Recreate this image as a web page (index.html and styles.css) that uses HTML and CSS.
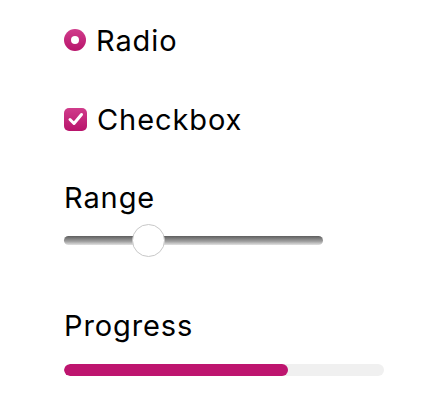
FILE: index.html
```html
<!DOCTYPE html>
<html>
<head>
<meta charset="utf-8">
<link rel="stylesheet" href="styles.css">
</head>
<body>
<div class="panel">
  <label class="row">
    <span class="radio"><span class="radio-dot"></span></span>
    <span class="text">Radio</span>
  </label>
  <label class="row">
    <span class="check">
      <svg width="22" height="22" viewBox="0 0 22 22"><path d="M5 11.5 L9 15.5 L16.5 6.5" fill="none" stroke="#fff" stroke-width="3" stroke-linecap="round" stroke-linejoin="round"/></svg>
    </span>
    <span class="text">Checkbox</span>
  </label>
  <div class="label range-label">Range</div>
  <div class="slider">
    <div class="track"></div>
    <div class="thumb"></div>
  </div>
  <div class="label progress-label">Progress</div>
  <div class="progress"><div class="fill" style="width:70%"></div></div>
</div>
</body>
</html>
```
FILE: styles.css
```css
html, body {
  margin: 0;
  background: #fff;
}
body {
  font-family: Inter, "Noto Sans", sans-serif;
  color: #000;
}
.panel {
  display: flex;
  flex-direction: column;
  padding: 20px 0 0 64px;
  width: 320px;
}
.row {
  display: flex;
  align-items: center;
  gap: 10px;
  height: 40px;
  font-size: 29px;
  letter-spacing: 0.9px;
}
.row + .row {
  margin-top: 39px;
}
.radio {
  width: 22px;
  height: 22px;
  border-radius: 50%;
  background: linear-gradient(#d03c8b, #b8146b);
  display: flex;
  align-items: center;
  justify-content: center;
  flex: none;
}
.radio-dot {
  width: 8px;
  height: 8px;
  border-radius: 50%;
  background: #fff;
}
.check {
  width: 23px;
  height: 23px;
  border-radius: 5px;
  background: linear-gradient(#d03c8b, #b8146b);
  display: flex;
  align-items: center;
  justify-content: center;
  flex: none;
}
.check svg { display: block; }
.label {
  font-size: 29px;
  letter-spacing: 0.9px;
  line-height: 40px;
  height: 40px;
}
.range-label { margin-top: 39px; }
.slider {
  position: relative;
  margin-top: 6px;
  height: 32px;
  width: 259px;
  display: flex;
  align-items: center;
}
.track {
  width: 100%;
  height: 9px;
  border-radius: 5px;
  background: linear-gradient(#5e5e5e, #a0a0a0 60%, #e2e2e2);
}
.thumb {
  position: absolute;
  left: 68px;
  top: 0;
  width: 31px;
  height: 31px;
  border-radius: 50%;
  background: #fff;
  border: 1px solid #c8c8c8;
}
.progress-label { margin-top: 50px; }
.progress {
  margin-top: 18px;
  height: 12px;
  width: 320px;
  border-radius: 6px;
  background: #f0f0f0;
  overflow: hidden;
}
.fill {
  height: 100%;
  border-radius: 6px;
  background: #be156f;
}
```
